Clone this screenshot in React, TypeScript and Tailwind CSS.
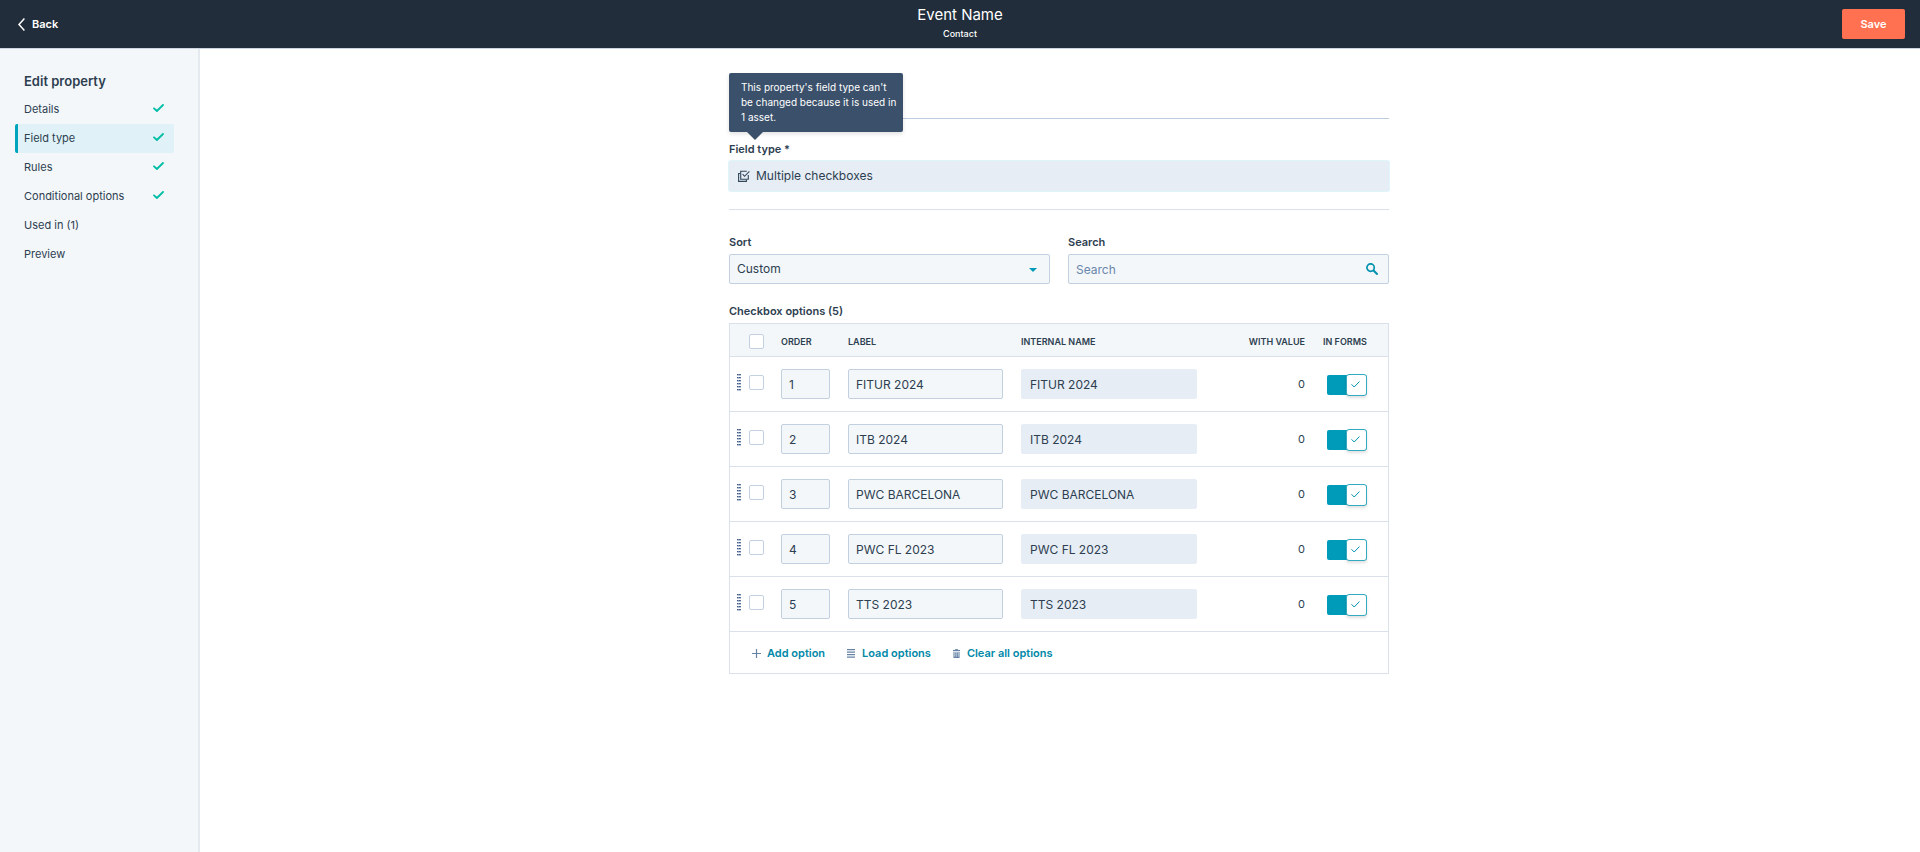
import { useState } from "react";

const NAV_ITEMS = [
  { label: "Details", done: true },
  { label: "Field type", done: true, active: true },
  { label: "Rules", done: true },
  { label: "Conditional options", done: true },
  { label: "Used in (1)", done: false },
  { label: "Preview", done: false },
];

const OPTIONS = ["FITUR 2024", "ITB 2024", "PWC BARCELONA", "PWC FL 2023", "TTS 2023"];

const labelClass = "block text-[11px] leading-4 font-semibold";
const boxClass =
  "h-[30px] w-full rounded-[2px] border border-[#c3d0e0] bg-[#f3f7fa] px-[7px] text-xs text-[#2d3e50] outline-none";
const lockedClass =
  "h-[30px] w-full rounded-[2px] border border-[#e6edf5] bg-[#e6edf5] px-2 pt-0.5 text-xs text-[#2d3e50] outline-none";
const checkboxClass =
  "block size-[15px] appearance-none rounded-[2px] border border-[#c3d0e0] bg-white checked:bg-[#0091ae]";
const headClass = "px-[9px] pt-1 text-[9px] font-semibold whitespace-nowrap";

function StepCheck() {
  return (
    <svg className="mb-[3px] h-2 w-[11px]" viewBox="0 0 11 8" fill="none" stroke="#00bda5" strokeWidth="1.8" strokeLinecap="round" strokeLinejoin="round" aria-hidden="true">
      <path d="M1 4.3 3.9 7 10 1" />
    </svg>
  );
}

function CheckboxesIcon() {
  return (
    <svg className="size-3 shrink-0" viewBox="0 0 12 12" fill="none" stroke="#33475b" aria-hidden="true">
      <path d="M2.2 3.5H.6v7.9h7.8V9.8" strokeWidth="1.1" />
      <path d="M8.8 1.3H2.7v7.9h7.6V5" strokeWidth="1.1" />
      <path d="M4.6 4.2 6.6 6.3 11.4 1.3" strokeWidth="1.1" />
    </svg>
  );
}

function SearchIcon() {
  return (
    <svg className="block size-3" viewBox="0 0 12 12" fill="none" stroke="#0091ae" strokeWidth="1.7" aria-hidden="true">
      <circle cx="4.6" cy="4.6" r="3.7" />
      <path d="m7.3 7.3 4.3 4.3" strokeWidth="2" />
    </svg>
  );
}

function DragHandle() {
  return (
    <svg className="block h-[17px] w-1" viewBox="0 0 4 17" shapeRendering="crispEdges" aria-hidden="true">
      {[0, 3, 6, 9, 12, 15].map((y) => (
        <g key={y}>
          <rect x="0" y={y} width="4" height="2" fill="#b9c6d9" />
          <rect x="0" y={y} width="1" height="1" fill="#425b86" />
          <rect x="1" y={y} width="1" height="1" fill="#7f93b2" />
          <rect x="2" y={y} width="1" height="1" fill="#425b86" />
          <rect x="3" y={y} width="1" height="1" fill="#5d759b" />
        </g>
      ))}
    </svg>
  );
}

function Toggle({ name }: { name: string }) {
  const [on, setOn] = useState(true);
  return (
    <label className="relative ml-1 flex h-[22px] w-10 cursor-pointer items-center">
      <input
        type="checkbox"
        role="switch"
        aria-label={`Show ${name} in forms`}
        checked={on}
        onChange={() => setOn(!on)}
        className="peer h-5 w-10 appearance-none rounded-[2px] bg-[#cbd6e2] checked:bg-[#009bb8]"
      />
      <span className="pointer-events-none absolute left-0 flex h-[22px] w-[21px] items-center justify-center rounded-[3px] border border-[#33aabf] bg-white shadow-[0_2px_3px_rgba(0,0,0,0.12)] peer-checked:left-[19px]">
        <svg className="mr-0.5 h-[7px] w-[9px]" viewBox="0 0 9 7" fill="none" stroke="#0091ae" strokeLinecap="round" strokeLinejoin="round" aria-hidden="true">
          <path d="M.8 3.6 3.2 6 8.2.8" />
        </svg>
      </span>
    </label>
  );
}

function OptionRow({ name, order }: { name: string; order: number }) {
  return (
    <tr className="h-[55px] border-b border-[#dae1ea]">
      <td className="pl-[7px]">
        <div className="flex items-center gap-2 pb-[3px]">
          <button type="button" aria-label={`Reorder ${name}`} className="cursor-grab">
            <DragHandle />
          </button>
          <input type="checkbox" aria-label={`Select ${name}`} className={checkboxClass} />
        </div>
      </td>
      <td className="px-[9px]">
        <input aria-label={`Order of ${name}`} defaultValue={order} className={`${boxClass} pt-0.5`} />
      </td>
      <td className="px-[9px]">
        <input aria-label={`Label of ${name}`} defaultValue={name} className={`${boxClass} pt-0.5`} />
      </td>
      <td className="px-[9px]">
        <input aria-label={`Internal name of ${name}`} value={name} readOnly className={lockedClass} />
      </td>
      <td className="px-[9px] pt-0.5 text-right text-[11px]">0</td>
      <td className="px-[9px] pt-0.5">
        <Toggle name={name} />
      </td>
    </tr>
  );
}

export default function App() {
  return (
    <div className="flex min-h-screen flex-col bg-white font-['Inter','Liberation_Sans',sans-serif] text-[#2d3e50]">
      <header className="grid h-[49px] grid-cols-3 items-center border-b border-[#cbd6e2] bg-[#212d3a] px-[15px] text-white">
        <a href="#back" className="flex items-center gap-[7px] justify-self-start pl-[3px] text-[11px] font-semibold">
          <svg className="h-[13px] w-[7px]" viewBox="0 0 7 13" fill="none" stroke="currentColor" strokeWidth="1.5" aria-hidden="true">
            <path d="M6.4.6 1 6.5l5.4 5.9" />
          </svg>
          Back
        </a>
        <div className="text-center">
          <h1 className="text-[15px] leading-5">Event Name</h1>
          <p className="text-[9px] leading-[18px] font-medium">Contact</p>
        </div>
        <button type="button" className="h-[30px] w-[63px] justify-self-end rounded-[2px] bg-[#ff7150] text-[11px] font-semibold">
          Save
        </button>
      </header>

      <div className="flex grow">
        <aside className="w-[200px] shrink-0 border-r-2 border-[#e5eaf0] bg-[#f3f7fa] pt-[22px] pr-6 pl-[15px]">
          <h2 className="pl-[9px] text-[13px] leading-5 font-semibold">Edit property</h2>
          <nav className="mt-1">
            {NAV_ITEMS.map((item) => (
              <a
                key={item.label}
                href="#step"
                aria-current={item.active ? "step" : undefined}
                className={
                  item.active
                    ? "flex h-[29px] items-center justify-between rounded-[2px] border-l-[3px] border-[#00a4bd] bg-[#e0f2f7] pr-2.5 pl-1.5 text-[11px]"
                    : "flex h-[29px] items-center justify-between border-l-[3px] border-transparent pr-2.5 pl-1.5 text-[11px]"
                }
              >
                {item.label}
                {item.done && <StepCheck />}
              </a>
            ))}
          </nav>
        </aside>

        <main className="grow pr-0.5">
          <div className="mx-auto max-w-[660px]">
            <div className="h-[70px] border-b border-[#bccbde]" />

            <div className="relative mt-[22px]">
              <div role="tooltip" className="absolute bottom-full left-0 mb-[9px] w-[174px] rounded-[2px] bg-[#3b516b] py-[7px] pr-1 pl-3 text-[10px] leading-[15px] text-white shadow-[0_2px_4px_rgba(0,0,0,0.12)]">
                This property's field type can't be changed because it is used in 1 asset.
                <svg className="absolute top-full left-[18px] h-2 w-4" viewBox="0 0 16 8" fill="#3b516b" aria-hidden="true">
                  <path d="M0 0h16L8 8z" />
                </svg>
              </div>
              <label htmlFor="field-type" className={labelClass}>
                Field type *
              </label>
              <button
                id="field-type"
                type="button"
                disabled
                className="mt-1 flex h-[30px] w-full items-center gap-1.5 rounded-[2px] bg-[#e6edf5] px-[9px] text-xs ring-1 ring-[#def5fa]"
              >
                <CheckboxesIcon />
                Multiple checkboxes
              </button>
            </div>

            <hr className="mt-[18px] border-[#d9e0e9]" />

            <div className="mt-6 grid grid-cols-2 gap-[18px]">
              <div>
                <label htmlFor="sort" className={labelClass}>
                  Sort
                </label>
                <div className="relative mt-1">
                  <select id="sort" className={`${boxClass} appearance-none`}>
                    <option>Custom</option>
                  </select>
                  <svg className="pointer-events-none absolute top-3.5 right-[13px] h-1 w-2" viewBox="0 0 8 4" fill="#009bb8" aria-hidden="true">
                    <path d="M0 0h8L4 4z" />
                  </svg>
                </div>
              </div>
              <div>
                <label htmlFor="search" className={labelClass}>
                  Search
                </label>
                <div className="relative mt-1">
                  <input id="search" type="search" placeholder="Search" className={`${boxClass} placeholder:text-[#6a86ab]`} />
                  <button type="button" aria-label="Run search" className="absolute top-[9px] right-[11px]">
                    <SearchIcon />
                  </button>
                </div>
              </div>
            </div>

            <h3 className="mt-[19px] mb-1 text-[11px] leading-4 font-semibold">Checkbox options (5)</h3>
            <div className="border border-[#dae1ea]">
              <table className="w-full table-fixed border-collapse text-left">
                <colgroup>
                  <col className="w-[42px]" />
                  <col className="w-[67px]" />
                  <col />
                  <col className="w-[194px]" />
                  <col className="w-[108px]" />
                  <col className="w-[74px]" />
                </colgroup>
                <thead>
                  <tr className="h-8 border-b border-[#dae1ea] bg-[#f3f7fa]">
                    <th className="pt-1 pl-[19px]">
                      <input type="checkbox" aria-label="Select all options" className={checkboxClass} />
                    </th>
                    <th className={headClass}>ORDER</th>
                    <th className={headClass}>LABEL</th>
                    <th className={headClass}>INTERNAL NAME</th>
                    <th className={`${headClass} text-right`}>WITH VALUE</th>
                    <th className={headClass}>IN FORMS</th>
                  </tr>
                </thead>
                <tbody>
                  {OPTIONS.map((name, index) => (
                    <OptionRow key={name} name={name} order={index + 1} />
                  ))}
                </tbody>
              </table>
              <div className="flex h-[41px] items-center gap-[22px] pt-[3px] pl-[22px] text-[11px] font-semibold text-[#0088a8]">
                <button type="button" className="flex items-center gap-1.5">
                  <svg className="size-[9px]" viewBox="0 0 9 9" stroke="#6683a6" strokeWidth="1.2" aria-hidden="true">
                    <path d="M4.5 0v9M0 4.5h9" />
                  </svg>
                  Add option
                </button>
                <button type="button" className="flex items-center gap-[7px]">
                  <svg className="h-[9px] w-2" viewBox="0 0 8 9" stroke="#6683a6" strokeWidth="1.3" aria-hidden="true">
                    <path d="M0 .7h8M0 3.2h8M0 5.7h8M0 8.2h8" />
                  </svg>
                  Load options
                </button>
                <button type="button" className="flex items-center gap-[7px]">
                  <svg className="h-[9px] w-[7px]" viewBox="0 0 7 9" fill="none" stroke="#6683a6" aria-hidden="true">
                    <path d="M0 1.6h7" strokeWidth="1.2" />
                    <path d="M2.3 1.3V.5h2.4v.8" strokeWidth=".9" />
                    <path d="M1 3v5.4h5V3M2.8 3.2v4.6M4.3 3.2v4.6" strokeWidth="1.1" />
                  </svg>
                  Clear all options
                </button>
              </div>
            </div>
          </div>
        </main>
      </div>
    </div>
  );
}
